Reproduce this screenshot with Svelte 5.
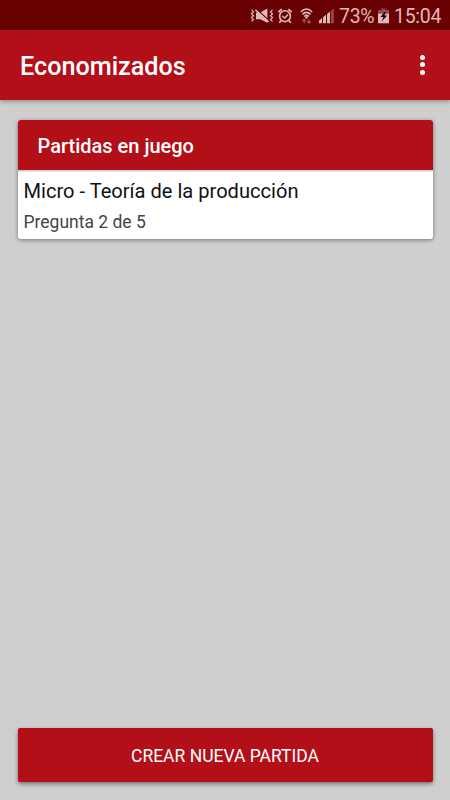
<script lang="ts">
  type Game = {
    id: number;
    title: string;
    question: number;
    total: number;
  };

  let battery = $state(73);
  let time = $state('15:04');

  let games = $state<Game[]>([
    { id: 1, title: 'Micro - Teoría de la producción', question: 2, total: 5 }
  ]);
</script>

<div class="screen">
  <div class="status">
    <!-- vibrate / muted -->
    <svg class="mute" width="24" height="16" viewBox="0 0 24 16" aria-hidden="true">
      <path
        d="M1.5 2l2 1.9-2 1.9 2 1.9-2 1.9 2 1.9-2 1.9M22.5 2l-2 1.9 2 1.9-2 1.9 2 1.9-2 1.9 2 1.9"
        fill="none"
        stroke="currentColor"
        stroke-width="1.2"
      />
      <path d="M6 4.6h4.2L17.4.6v14.2l-7.2-3.6H6z" fill="currentColor" />
      <path d="M6.5 1.3L19.5 13" stroke="#690001" stroke-width="1.4" />
      <path d="M5.4 1.8L18.6 13.9" stroke="currentColor" stroke-width="1.5" />
    </svg>

    <!-- alarm -->
    <svg class="alarm" width="15" height="16" viewBox="0 0 15 16" fill="none" stroke="currentColor" aria-hidden="true">
      <circle cx="7" cy="8.2" r="5.4" stroke-width="1.6" />
      <path d="M.4 4.2L3.7 1.1M10.3 1.1l3.3 3.1M3.1 12.6l-1.8 2.2M10.9 12.6l1.8 2.2" stroke-width="1.8" />
      <path d="M4.1 7.8l2.5 2.2 3.6-3.6" stroke-width="1.4" />
    </svg>

    <!-- wifi with traffic arrows -->
    <svg class="wifi" width="14" height="16" viewBox="0 0 14 16" fill="none" stroke="currentColor" aria-hidden="true">
      <path d="M.8 4Q6.5-2 12.2 4M2.5 6.4Q6.5 2.3 10.5 6.4M4.2 8.5Q6.5 6.2 8.8 8.5" stroke-width="1.6" />
      <circle cx="6.5" cy="9.5" r="1.2" fill="currentColor" stroke="none" />
      <path
        d="M4.2 15.3v-4M2.4 13.2l1.8-1.8L6 13.2M9 11.2v3.8M7.2 13.3L9 15.1l1.8-1.8"
        stroke-width="1.2"
        opacity=".5"
      />
    </svg>

    <!-- signal -->
    <svg class="signal" width="15" height="16" viewBox="0 0 15 16" fill="currentColor" aria-hidden="true">
      <path d="M0 12.4l3-2.4v5.3H0zM4 9.2l3-2.4v8.5H4zM8 6l3-2.4v11.7H8z" />
      <path d="M12 2.8l2.8-2.3v14.8H12z" opacity=".4" />
    </svg>

    <span class="percent">{battery}%</span>

    <!-- charging battery -->
    <svg class="battery" width="11" height="16" viewBox="0 0 11 16" aria-hidden="true">
      <path d="M3.2.5h4.6v1.6H11v3.4H0V2.1h3.2z" fill="currentColor" opacity=".4" />
      <path d="M0 5.5h11v9.8H0z" fill="currentColor" />
      <path d="M6.4 4L2.6 9h2.8L3.8 13.5l5.3-6H6.3L8.2 4z" fill="#160000" />
    </svg>

    <span class="time">{time}</span>
  </div>

  <header class="toolbar">
    <h1>Economizados</h1>
    <button class="menu" aria-label="Más opciones">
      <span class="dot"></span>
      <span class="dot"></span>
      <span class="dot"></span>
    </button>
  </header>

  <main>
    <section class="card">
      <h2>Partidas en juego</h2>
      <ul>
        {#each games as game (game.id)}
          <li>
            <span class="title">{game.title}</span>
            <span class="progress">Pregunta {game.question} de {game.total}</span>
          </li>
        {/each}
      </ul>
    </section>

    <button class="create">CREAR NUEVA PARTIDA</button>
  </main>
</div>

<style>
  :global(body) {
    background: #cfcfcf;
  }

  .screen {
    --red: #b30f18;

    height: 100vh;
    display: flex;
    flex-direction: column;
    overflow: hidden;
    background: #cfcfcf;
    font-family: Roboto, 'Liberation Sans', sans-serif;
  }

  .status {
    flex: none;
    box-sizing: border-box;
    height: 30px;
    padding: 1px 9px 0 0;
    display: flex;
    align-items: center;
    justify-content: flex-end;
    background: #690001;
    color: #deb9b9;
    font-size: 19.5px;
    line-height: 30px;
    letter-spacing: -0.3px;
    white-space: nowrap;
  }

  .status svg {
    flex: none;
    display: block;
  }

  .mute {
    margin-right: 4px;
  }

  .alarm {
    margin-right: 7px;
  }

  .wifi {
    margin-right: 5px;
  }

  .signal {
    margin-right: 5px;
  }

  .percent {
    width: 39px;
    padding-top: 2px;
  }

  .battery {
    margin-right: 5px;
  }

  .time {
    width: 47px;
    padding-top: 2px;
  }

  .toolbar {
    flex: none;
    box-sizing: border-box;
    height: 70px;
    padding: 3px 15px 0 20px;
    display: flex;
    align-items: center;
    justify-content: space-between;
    background: var(--red);
    color: #fff;
    box-shadow: 0 1px 5px rgba(0, 0, 0, 0.4);
  }

  h1,
  h2 {
    margin: 0;
    font-weight: 500;
  }

  h1 {
    font-size: 25.2px;
    line-height: 30px;
  }

  button {
    border: 0;
    font: inherit;
    color: inherit;
  }

  .menu {
    width: 25px;
    padding: 0 0 4px;
    display: flex;
    flex-direction: column;
    align-items: center;
    gap: 2.5px;
    background: none;
  }

  .dot {
    width: 5px;
    height: 5px;
    border-radius: 50%;
    background: #fff;
  }

  main {
    flex: 1;
    padding: 20px 17.5px 18px;
    display: flex;
    flex-direction: column;
    justify-content: space-between;
  }

  .card {
    overflow: hidden;
    border-radius: 3px;
    background: #fff;
    box-shadow: 0 1px 4px rgba(0, 0, 0, 0.45);
  }

  h2 {
    height: 50px;
    padding-left: 20px;
    background: var(--red);
    color: #fff;
    font-size: 20px;
    line-height: 52px;
    box-shadow: 0 1px 2px rgba(0, 0, 0, 0.3);
  }

  ul {
    margin: 0;
    padding: 0;
    list-style: none;
  }

  li {
    box-sizing: border-box;
    height: 69px;
    padding: 7px 6px 0;
    display: flex;
    flex-direction: column;
    gap: 5px;
  }

  .title {
    color: #111;
    font-size: 20.1px;
    line-height: 28px;
  }

  .progress {
    color: #444;
    font-size: 17.5px;
    line-height: 24px;
  }

  .create {
    height: 54px;
    padding: 2px 0 0;
    border-radius: 2px;
    background: var(--red);
    color: #fff;
    font-size: 17.5px;
    box-shadow: 0 2px 4px rgba(0, 0, 0, 0.45);
  }
</style>
